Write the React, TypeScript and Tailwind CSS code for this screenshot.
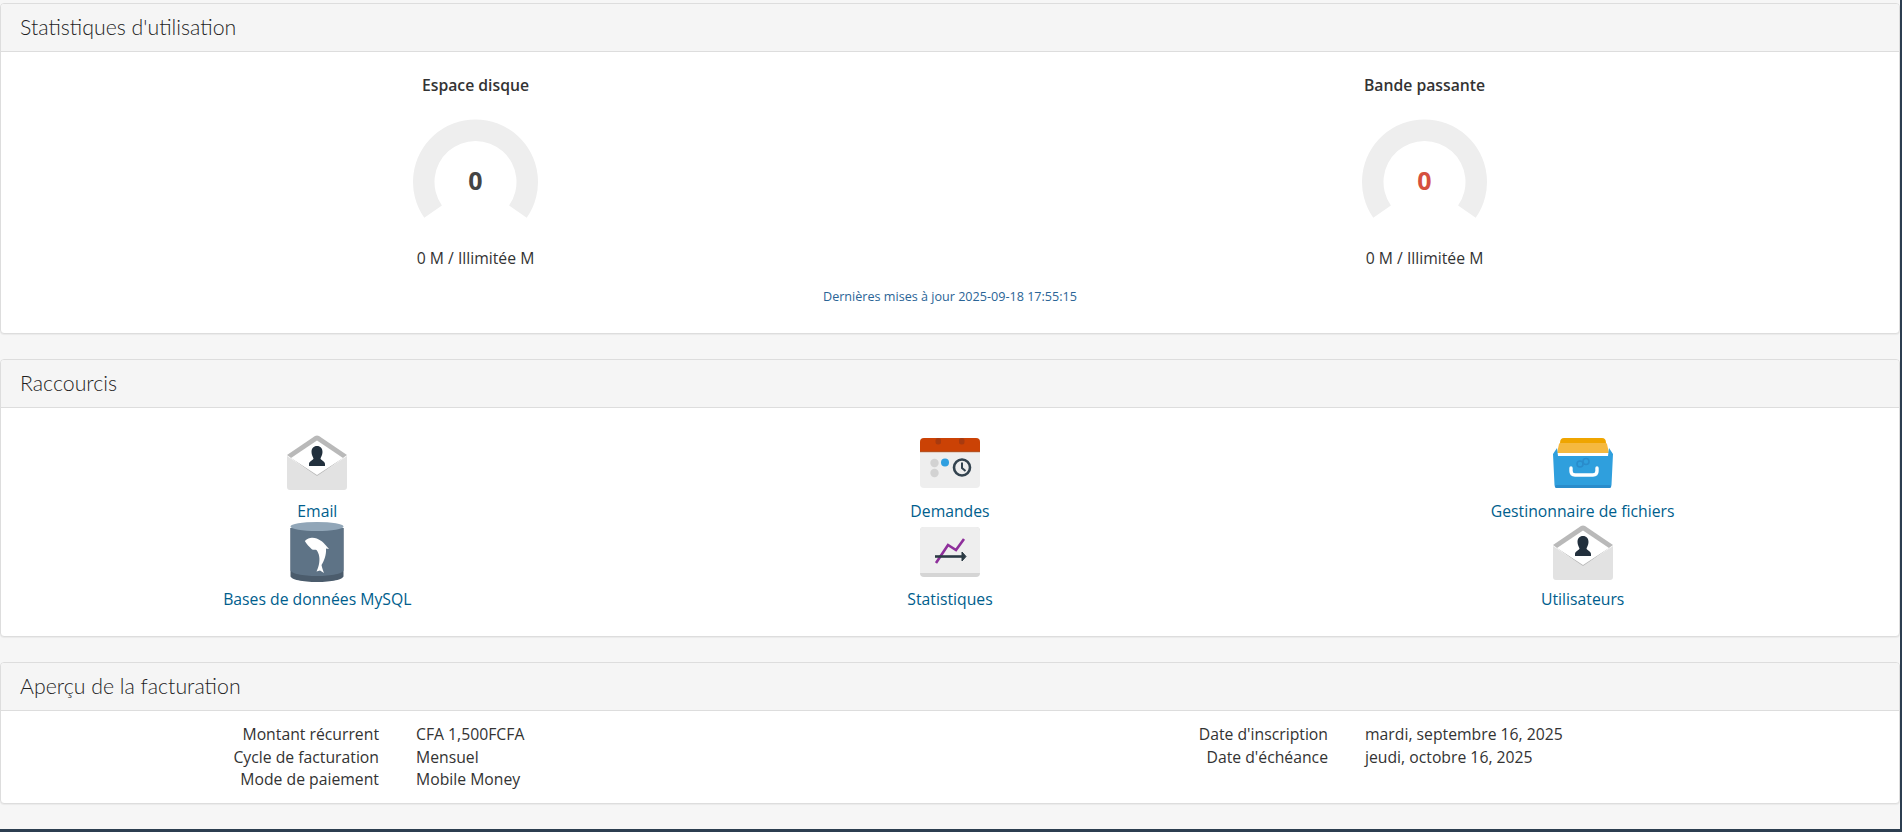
import type { ReactNode } from 'react';

function Panel({ title, children }: { title: string; children: ReactNode }) {
  return (
    <section className="bg-white border border-[#dddddd] rounded-[4px] shadow-[0_1px_1px_rgba(0,0,0,0.05)] overflow-hidden">
      <h3 className="h-[48px] bg-[#f5f5f5] border-b border-[#dddddd] pl-[19px] flex items-center text-[21.3px] font-light text-[#1f1f1f] font-['Lato',sans-serif]">
        {title}
      </h3>
      {children}
    </section>
  );
}

function Gauge({ title, color }: { title: string; color: string }) {
  return (
    <div className="flex flex-col items-center">
      <h4 className="text-[15.75px] leading-[20px] font-semibold text-[#333333]">{title}</h4>
      <svg width="130" height="102" viewBox="0 0 130 102" className="mt-[23px] shrink-0">
        <path
          d="M13.3 99.8 A62.5 62.5 0 1 1 115.7 99.8 L98.1 87.5 A41 41 0 1 0 30.9 87.5 Z"
          fill="#eeeeee"
        />
        <text
          x="64.5"
          y="71.5"
          textAnchor="middle"
          fontSize="25"
          fontWeight="700"
          fill={color}
          fontFamily="'Open Sans', sans-serif"
        >
          0
        </text>
      </svg>
      <p className="mt-[28px] text-[15.75px] leading-[20px] text-[#333333]">0 M / Illimitée M</p>
    </div>
  );
}

function EnvelopeIcon({ y }: { y: number }) {
  return (
    <svg width="64" height="64" viewBox="0 0 64 64" className="shrink-0">
      <g transform={`translate(2 ${y})`}>
        <path d="M0 20 L28 1 Q30 0 32 1 L60 20 L30 42 Z" fill="#b9b9b9" />
        <path d="M4 23 L30 5.5 L56 23 L30 40 Z" fill="#ffffff" />
        <path d="M0 21 L30 41 L60 21 V52 Q60 55 57 55 H3 Q0 55 0 52 Z" fill="#e2e2e2" />
        <path
          d="M30 11 C33.5 11 35.5 13.5 35.5 17 C35.5 20 34 22 33.5 23.5 C34 25.5 38 26 38 29 V31 H22 V29 C22 26 26 25.5 26.5 23.5 C26 22 24.5 20 24.5 17 C24.5 13.5 26.5 11 30 11 Z"
          fill="#22303d"
        />
      </g>
    </svg>
  );
}

function CalendarIcon() {
  return (
    <svg width="64" height="64" viewBox="0 0 64 64" className="shrink-0">
      <g transform="translate(2 8)">
        <rect x="0" y="0" width="60" height="50" rx="4" fill="#eeeeee" />
        <path d="M0 14 V4 Q0 0 4 0 H56 Q60 0 60 4 V14 Z" fill="#cb4205" />
        <rect x="0" y="13" width="60" height="1.2" fill="#b5501f" />
        <rect x="15.5" y="0" width="5.5" height="6.5" rx="2.5" fill="#a83a0f" />
        <rect x="39" y="0" width="5.5" height="6.5" rx="2.5" fill="#a83a0f" />
        <circle cx="14.5" cy="25" r="4.2" fill="#d2d2d2" />
        <circle cx="14.5" cy="35" r="4.2" fill="#d2d2d2" />
        <circle cx="25" cy="24.5" r="4" fill="#2f9fe0" />
        <circle cx="42" cy="29.5" r="8" fill="none" stroke="#33434f" strokeWidth="2.6" />
        <path d="M42 24.5 V30 L45.5 33" fill="none" stroke="#33434f" strokeWidth="2" />
      </g>
    </svg>
  );
}

function DrawerIcon() {
  return (
    <svg width="64" height="64" viewBox="0 0 64 64" className="shrink-0">
      <g transform="translate(2 8)">
        <path d="M7 5 Q7 0 11 0 H49 Q53 0 53 5 V12 H7 Z" fill="#efa500" />
        <path d="M4 15 L6 6 Q6 5 8 5 H52 Q54 5 54 6 L56 15 Z" fill="#f5b93f" />
        <path
          d="M0 16 L4 10 L5 18 H55 L56 10 L60 16 L58.5 47 Q58.3 50 55 50 H5 Q1.7 50 1.5 47 Z"
          fill="#2f9fdd"
        />
        <rect x="2" y="47" width="56" height="3" rx="1.5" fill="#2a8ccb" />
        <path
          d="M18 30 V33 Q18 37 22 37 H40 Q44 37 44 33 V30"
          fill="none"
          stroke="#ffffff"
          strokeWidth="3.4"
          strokeLinecap="round"
        />
        <circle cx="27" cy="26" r="3" fill="none" stroke="#2a8ccb" strokeWidth="1.6" />
        <circle cx="33" cy="23.5" r="3" fill="none" stroke="#2a8ccb" strokeWidth="1.6" />
      </g>
    </svg>
  );
}

function DatabaseIcon() {
  return (
    <svg width="64" height="64" viewBox="0 0 64 64" className="shrink-0">
      <g transform="translate(5.5 4)">
        <path d="M0 6 V54 C0 57.5 12 60 26.5 60 C41 60 53 57.5 53 54 V6 Z" fill="#4b5c6c" />
        <path d="M0 6 V48 C0 51.5 12 54 26.5 54 C41 54 53 51.5 53 48 V6 Z" fill="#5e7386" />
        <ellipse cx="26.5" cy="4.5" rx="26.5" ry="4.5" fill="#91a6b8" />
        <path
          d="M14.3 19 C17 16 20 15.5 22 15.7 C28 16 33 20 35 23 L38.5 27 L35.5 26.5 C36 33 33.5 39 31 43 C31.5 46 32.5 48 33.5 51 L29.5 48.5 L26 49.5 C27 47 28 45 28.5 42 C29.5 37 29 32 26 28 C24 27 22 28.5 21 27 C19 25 16 22 14.3 19 Z"
          fill="#ffffff"
        />
      </g>
    </svg>
  );
}

function ChartIcon() {
  return (
    <svg width="64" height="64" viewBox="0 0 64 64" className="shrink-0">
      <g transform="translate(2 9)">
        <path d="M0 4 Q0 0 4 0 H56 Q60 0 60 4 V46 Q60 50 56 50 H4 Q0 50 0 46 Z" fill="#d5d5d5" />
        <path d="M0 4 Q0 0 4 0 H56 Q60 0 60 4 V46 H0 Z" fill="#eeeeee" />
        <path d="M16 36 L28 18 L36 23 L44 12" fill="none" stroke="#8e2f9b" strokeWidth="2.6" />
        <path d="M15 29.5 H44" stroke="#2b3a44" strokeWidth="2.6" />
        <path d="M42 25 L46 29.5 L42 34 Z" fill="#2b3a44" stroke="#2b3a44" strokeWidth="1" />
      </g>
    </svg>
  );
}

function Shortcut({ icon, label }: { icon: ReactNode; label: string }) {
  return (
    <a href="#" className="flex flex-col items-center h-[88px] text-[15.75px] leading-[20px] text-[#005e8d]">
      {icon}
      <span className="mt-[7px] shrink-0">{label}</span>
    </a>
  );
}

function BillingRow({ label, value }: { label: string; value: string }) {
  return (
    <div className="flex text-[15.75px] leading-[22.5px] text-[#333333]">
      <span className="w-[378px] text-right">{label}</span>
      <span className="ml-[37px]">{value}</span>
    </div>
  );
}

export default function App() {
  return (
    <div className="relative h-[832px] overflow-hidden bg-[#f6f6f6] pt-[3px] pr-[2px] font-['Open_Sans',sans-serif] flex flex-col">
      {/* Right edge strip */}
      <div className="absolute top-0 right-0 bottom-0 w-[2px] bg-[#2c3e50]"></div>

      <Panel title="Statistiques d'utilisation">
        <div className="h-[281px] pt-[23px]">
          <div className="grid grid-cols-2">
            <Gauge title="Espace disque" color="#444444" />
            <Gauge title="Bande passante" color="#d5503f" />
          </div>
          <p className="mt-[20px] text-center text-[12.6px] leading-[18px] text-[#2a6496]">
            Dernières mises à jour 2025-09-18 17:55:15
          </p>
        </div>
      </Panel>

      <div className="mt-[25px]">
        <Panel title="Raccourcis">
          <div className="h-[228px] pt-[22px] grid grid-cols-3 content-start">
            <Shortcut icon={<EnvelopeIcon y={5} />} label="Email" />
            <Shortcut icon={<CalendarIcon />} label="Demandes" />
            <Shortcut icon={<DrawerIcon />} label="Gestinonnaire de fichiers" />
            <Shortcut icon={<DatabaseIcon />} label="Bases de données MySQL" />
            <Shortcut icon={<ChartIcon />} label="Statistiques" />
            <Shortcut icon={<EnvelopeIcon y={7} />} label="Utilisateurs" />
          </div>
        </Panel>
      </div>

      <div className="mt-[25px]">
        <Panel title="Aperçu de la facturation">
          <div className="h-[92px] pt-[12px] grid grid-cols-2 content-start">
            <div>
              <BillingRow label="Montant récurrent" value="CFA 1,500FCFA" />
              <BillingRow label="Cycle de facturation" value="Mensuel" />
              <BillingRow label="Mode de paiement" value="Mobile Money" />
            </div>
            <div>
              <BillingRow label="Date d'inscription" value="mardi, septembre 16, 2025" />
              <BillingRow label="Date d'échéance" value="jeudi, octobre 16, 2025" />
            </div>
          </div>
        </Panel>
      </div>

      {/* Footer edge */}
      <div className="absolute left-0 right-0 bottom-0 h-[3px] bg-[#2c3e50]"></div>
    </div>
  );
}
